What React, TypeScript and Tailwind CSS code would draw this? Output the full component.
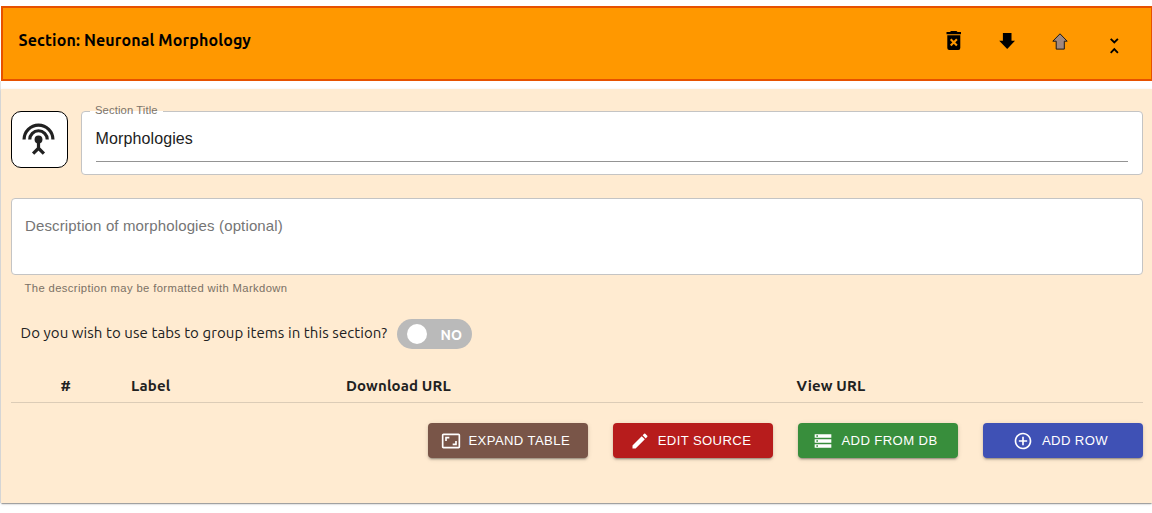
import type { ReactNode } from "react";
import { MdAddCircleOutline, MdAspectRatio, MdEdit, MdStorage } from "react-icons/md";

const ubuntu = "font-['Ubuntu','Noto_Sans',sans-serif]";

function AntennaIcon() {
  return (
    <svg width="35" height="35" viewBox="0 0 24 24" fill="none" stroke="#212121" strokeWidth="2.2">
      <path d="M2.1 12a9.9 9.9 0 0 1 19.8 0M6 12a6 6 0 0 1 12 0" />
      <path d="M12 13v5l-3.7 3.7M12 18l3.7 3.7" />
      <circle cx="12" cy="12" r="2.7" fill="#212121" stroke="none" />
    </svg>
  );
}

function DeleteIcon() {
  return (
    <svg width="16" height="20" viewBox="0 0 16 20" fill="none">
      <path d="M5 0h5.5l1 1H15v2.2H.5V1H4z" fill="#000" />
      <path d="M1.3 4.2h13V17a2 2 0 0 1-2 2h-9a2 2 0 0 1-2-2z" fill="#000" />
      <path d="M4.7 8.3l6.2 6.2M10.9 8.3l-6.2 6.2" stroke="#ff9800" strokeWidth="2.1" />
    </svg>
  );
}

function BlockArrow({ up = false }: { up?: boolean }) {
  return (
    <svg width="16" height="17" viewBox="0 0 16 17">
      {up ? (
        <path d="M8 .8L15.2 8.2H12.3v7.9H4.2V8.2H.8z" fill="#a1887f" stroke="#1a1a1a" strokeWidth="1" />
      ) : (
        <path d="M3.9 0h8.6v7.7h3.5L8.2 16 .2 7.7h3.7z" fill="#000" />
      )}
    </svg>
  );
}

function CollapseIcon() {
  return (
    <svg width="9" height="16" viewBox="0 0 9 16" fill="none" stroke="#000" strokeWidth="1.9">
      <path d="M.7 .9l3.6 3.6L7.9 .9M.7 14.8L4.3 11.2l3.6 3.6" />
    </svg>
  );
}

function ActionButton({ color, icon, gap, label }: { color: string; icon: ReactNode; gap: string; label: string }) {
  return (
    <button
      className={`flex h-[35px] w-40 items-center justify-center rounded-[4px] pr-[5px] text-[13.125px] tracking-[0.39px] text-white shadow-[0_3px_1px_-2px_rgba(0,0,0,0.2),0_2px_2px_0_rgba(0,0,0,0.14),0_1px_5px_0_rgba(0,0,0,0.12)] ${color} ${gap}`}
    >
      {icon}
      <span className="whitespace-nowrap">{label}</span>
    </button>
  );
}

export default function App() {
  return (
    <div className="h-[513px] w-[1152px] overflow-hidden bg-white pt-[6px] font-['Liberation_Sans',sans-serif] text-[#212121]">
      <header className="ml-px flex h-[75px] w-[1152px] justify-between border-2 border-[#e65100] bg-[#ff9800] pl-[15.5px] text-black">
        <h2 className={`mt-[20px] h-6 text-[16px] leading-6 font-bold tracking-[0.13px] whitespace-nowrap ${ubuntu}`}>
          Section: Neuronal Morphology
        </h2>
        <div className="flex pr-[32px]">
          <span className="mt-[23px] mr-[37px]"><DeleteIcon /></span>
          <span className="mt-[25px] mr-[37px]"><BlockArrow /></span>
          <span className="mt-[25px] mr-[42px]"><BlockArrow up /></span>
          <span className="mt-[30px]"><CollapseIcon /></span>
        </div>
      </header>

      <div className="h-[422px] border-l border-[#e5e5e5] pt-2">
        <main className="h-[414px] bg-[#ffebd1] px-[10px] pt-[22px] pr-[9px] shadow-[0_2px_1px_-1px_rgba(0,0,0,0.2),0_1px_1px_0_rgba(0,0,0,0.14),0_1px_3px_0_rgba(0,0,0,0.12)]">
          <div className="flex h-16 gap-[13px]">
            <button className="flex h-[57px] w-[57px] items-center justify-center rounded-[10px] border border-black bg-white pr-[2px] pb-px">
              <AntennaIcon />
            </button>
            <div className="relative h-16 flex-1 rounded-[4px] border border-[#c4c4c4] bg-white px-[14px]">
              <span className="absolute -top-px left-[8px] h-px w-[73px] bg-white" />
              <label className="absolute -top-[9px] left-[13px] text-[11.25px] leading-[14px] tracking-[0.105px] whitespace-nowrap text-[#7b736a]">
                Section Title
              </label>
              <div className="-ml-[0.5px] h-[50px] border-b border-[#949494] pt-[15px] text-[16px] leading-6 tracking-[0.12px]">
                Morphologies
              </div>
            </div>
          </div>

          <div className="mt-[23px] h-[77px] rounded-[4px] border border-[#c4c4c4] bg-white px-[13px] pt-[17px] text-[15px] leading-5 tracking-[0.14px] text-[#757575]">
            Description of morphologies (optional)
          </div>
          <p className="mt-[6px] ml-[13.5px] text-[11.25px] leading-[14px] tracking-[0.375px] text-[#7b7165]">
            The description may be formatted with Markdown
          </p>

          <div className="mt-6 flex h-[30px] items-center pl-[9.5px]">
            <span className={`w-[376.5px] pb-[2px] text-[15px] leading-6 tracking-[0.08px] whitespace-nowrap ${ubuntu}`}>
              Do you wish to use tabs to group items in this section?
            </span>
            <div className={`flex h-[30px] w-[75px] items-center rounded-full bg-[#bababa] pl-[10px] text-[14px] font-bold text-white ${ubuntu}`}>
              <span className="h-5 w-5 rounded-full bg-white" />
              <span className="ml-[13.5px] pt-[2px]">NO</span>
            </div>
          </div>

          <div className={`mt-[20px] flex h-[34px] border-b border-[#dcccb7] pt-[5px] text-[15px] leading-6 font-bold tracking-[0.14px] ${ubuntu}`}>
            <span className="w-[120px] pl-[49.5px]">#</span>
            <span className="w-[215px]">Label</span>
            <span className="w-[450.5px]">Download URL</span>
            <span>View URL</span>
          </div>

          <div className="mt-5 flex justify-end gap-[25px]">
            <ActionButton color="bg-[#795548]" gap="gap-[7.5px]" label="EXPAND TABLE" icon={<MdAspectRatio size={20} />} />
            <ActionButton color="bg-[#b71c1c]" gap="gap-[8px]" label="EDIT SOURCE" icon={<MdEdit size={20} />} />
            <ActionButton color="bg-[#388e3c]" gap="gap-[8px]" label="ADD FROM DB" icon={<MdStorage size={20} />} />
            <ActionButton color="bg-[#3f51b5]" gap="gap-[9px]" label="ADD ROW" icon={<MdAddCircleOutline size={20} />} />
          </div>
        </main>
      </div>
    </div>
  );
}
